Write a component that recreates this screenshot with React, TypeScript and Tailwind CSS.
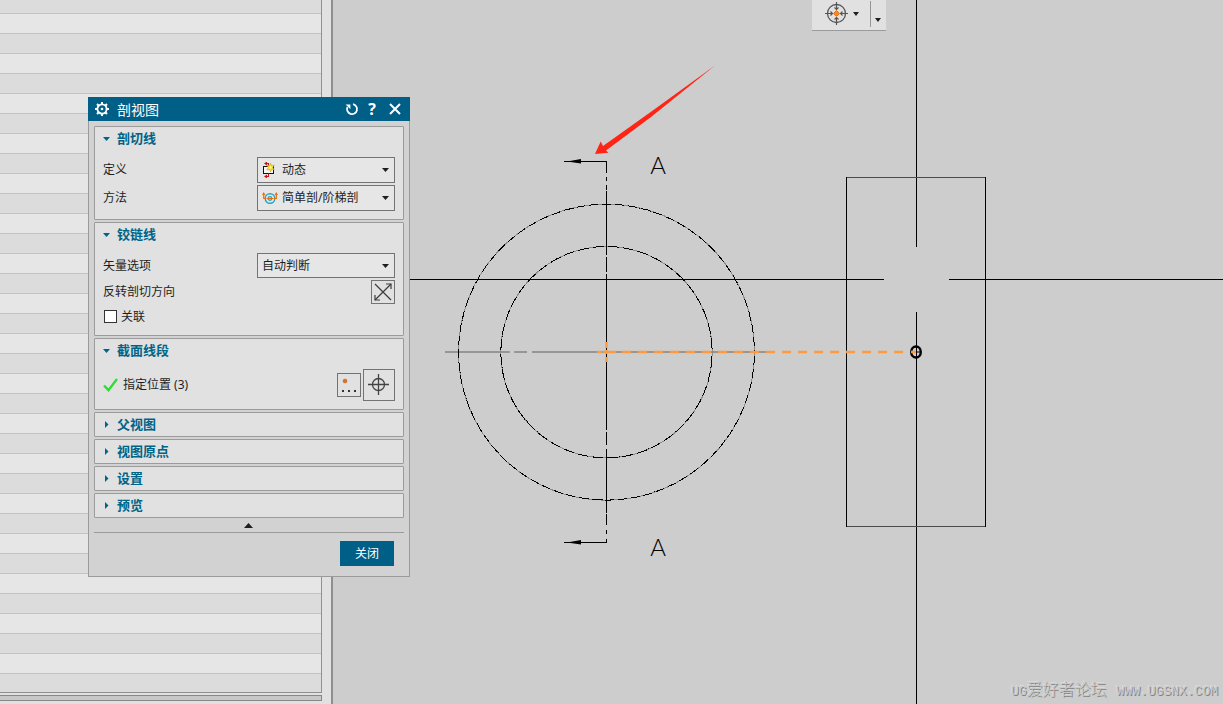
import React, { useState } from "react";

const ROWS = Array.from({ length: 60 }, (_, i) => i);

const Triangle = ({ className, points }: { className?: string; points: string }) => (
    <svg className={className} width="8" height="8" viewBox="0 0 8 8" fill="currentColor" aria-hidden="true">
        <polygon points={points} />
    </svg>
);

const DOWN = "0,2 7,2 3.5,6";
const RIGHT = "2,0 5.5,3.5 2,7";

const GearIcon = () => (
    <svg width="14" height="14" viewBox="0 0 14 14" fill="none" stroke="white" aria-hidden="true">
        <circle cx="7" cy="7" r="4.6" strokeWidth="1.8" />
        <circle cx="7" cy="7" r="1.3" fill="white" stroke="none" />
        <path d="M7 0v2.4M7 11.6V14M0 7h2.4M11.6 7H14M2 2l1.8 1.8M10.2 10.2L12 12M12 2l-1.8 1.8M3.8 10.2L2 12" strokeWidth="2" />
    </svg>
);

const ResetIcon = () => (
    <svg width="14" height="14" viewBox="0 0 14 14" fill="none" stroke="white" strokeWidth="1.8" aria-hidden="true">
        <path d="M8 2.2A5 5 0 1 1 2.4 5.2" />
        <path d="M0.6 2.400h4.800v4.800z" fill="white" stroke="none" />
    </svg>
);

const CloseIcon = () => (
    <svg width="12" height="12" viewBox="0 0 12 12" fill="none" stroke="white" strokeWidth="2" aria-hidden="true">
        <path d="M1 1l10 10M11 1L1 11" />
    </svg>
);

const DynamicIcon = () => (
    <svg width="16" height="16" viewBox="0 0 16 16" fill="none" aria-hidden="true">
        <rect x="1.5" y="4.500" width="10" height="7" fill="#f5f5f5" stroke="#111" />
        <path d="M6.500 1.5v3M6.500 11.500v3" stroke="#c81414" />
        <path d="M7 1.5H4M7 14.500H4" stroke="#c81414" />
        <path d="M2 1.5l3-2v4zM2 14.500l3-2v4z" fill="#c81414" />
        <path d="M8.500 1l1 2.700 2.800-.7-1.500 2.500 1.500 2.500-2.800-.6-1 2.600-1-2.600-2.800.6 1.500-2.500-1.500-2.500 2.800.7z" fill="#f5e52d" stroke="#8f8b3c" strokeWidth=".4" />
        <circle cx="8.500" cy="5.500" r="1" fill="#fffbd0" />
    </svg>
);

const StepIcon = () => (
    <svg width="16" height="16" viewBox="0 0 16 16" fill="none" aria-hidden="true">
        <circle cx="8" cy="8.500" r="4.800" stroke="#24a5c8" strokeWidth="1.4" />
        <circle cx="8" cy="8.500" r="1.800" stroke="#24a5c8" strokeWidth="1.3" />
        <path d="M1.700 3.500v5H4.500M14.300 3.500v5H11.500M5 8.500h6" stroke="#e8700a" strokeWidth="1.2" />
        <path d="M0 5L1.700 2 3.400 5zM12.600 5l1.700-3L16 5z" fill="#e8700a" />
    </svg>
);

const SwapIcon = () => (
    <svg width="18" height="18" viewBox="0 0 18 18" fill="none" stroke="#3c3c3c" strokeWidth="1.2" aria-hidden="true">
        <path d="M1 1l16 16M17 1L1 17" />
        <path d="M12 1h5v5M1 12v5h5" />
    </svg>
);

const CheckIcon = () => (
    <svg width="16" height="14" viewBox="0 0 16 14" fill="none" stroke="#32dc32" strokeWidth="2.4" aria-hidden="true">
        <path d="M1 7.5l4.5 4.7L14 1" />
    </svg>
);

const PointDialogIcon = () => (
    <svg width="22" height="22" viewBox="0 0 22 22" aria-hidden="true">
        <circle cx="7" cy="7" r="2" fill="#e07020" stroke="#a85010" strokeWidth=".4" />
        <path d="M4 16h2v2H4zM10 16h2v2h-2zM16 16h2v2h-2z" fill="#333" />
    </svg>
);

const CrosshairIcon = () => (
    <svg width="22" height="22" viewBox="0 0 22 22" fill="none" stroke="#444" strokeWidth="1.3" aria-hidden="true">
        <circle cx="10.500" cy="10.500" r="6" />
        <path d="M10.500 0v21M0 10.500h21" />
    </svg>
);

const SnapPointIcon = () => (
    <svg width="24" height="24" viewBox="0 0 24 24" fill="none" stroke="#555" aria-hidden="true">
        <circle cx="12.500" cy="11.500" r="9" strokeWidth="1.3" />
        <path d="M12.500 0v7M12.500 16v7M1 11.500h7M17 11.500h7" strokeWidth="1.2" />
        <path d="M10.500 5.500l2 2 2-2M10.500 17.500l2-2 2 2M6.500 9.500l2 2-2 2M18.500 9.500l-2 2 2 2" strokeWidth="1.1" />
        <path d="M12.500 8.500l3 3-3 3-3-3z" fill="#f58a17" stroke="#e0620a" strokeWidth=".8" />
    </svg>
);

type SectionProps = { title: string; defaultOpen?: boolean; children?: React.ReactNode };

const Section = ({ title, defaultOpen = false, children }: SectionProps) => {
    const [open, setOpen] = useState(defaultOpen);

    return (
        <section className="rounded-[1px] border border-[#9b9b9b] bg-[#e1e1e1]">
            <button
                type="button"
                aria-expanded={open}
                onClick={() => setOpen(!open)}
                className="flex h-[23px] w-full items-center gap-1.5 px-2 text-left text-[13px] font-bold text-[#006487]">
                <Triangle points={open ? DOWN : RIGHT} />
                <span>{title}</span>
            </button>
            {open && children && <div className="flex flex-col gap-0.5 px-2 pt-[7px] pb-2">{children}</div>}
        </section>
    );
};

type SelectRowProps = { id: string; label: string; options: string[]; icon?: React.ReactNode };

const SelectRow = ({ id, label, options, icon }: SelectRowProps) => (
    <div className="flex items-center justify-between">
        <label htmlFor={id}>{label}</label>
        <div className="relative w-[138px]">
            {icon && <span className="pointer-events-none absolute top-[5px] left-[5px]">{icon}</span>}
            <select
                id={id}
                className={`block w-full appearance-none border border-[#737373] bg-[#e6e6e6] pr-5 outline-none ${icon ? "h-[26px] pl-6" : "h-[25px] pl-1"}`}>
                {options.map((option) => (
                    <option key={option}>{option}</option>
                ))}
            </select>
            <Triangle points={DOWN} className="pointer-events-none absolute top-[9px] right-[5px]" />
        </div>
    </div>
);

const SectionViewDialog = () => (
    <div
        role="dialog"
        aria-labelledby="dialog-title"
        className="absolute top-[97px] left-[88px] w-[322px] bg-[#d2d2d2] text-xs text-[#1e1e1e]">
        <div className="flex h-6 items-center bg-[#005f87] pr-[9px] pl-[7px] text-white">
            <GearIcon />
            <h1 id="dialog-title" className="flex-1 pt-0.5 pl-2 text-sm leading-5">剖视图</h1>
            <div className="flex items-center gap-[7px]">
                <button type="button" aria-label="重置"><ResetIcon /></button>
                <button type="button" className="w-3 text-center font-['Open_Sans',sans-serif] text-base leading-5 font-bold">?</button>
                <button type="button" aria-label="关闭对话框" className="ml-1"><CloseIcon /></button>
            </div>
        </div>

        <div className="border border-t-0 border-[#9b9b9b] px-[5px] pt-[5px]">
            <div className="flex flex-col gap-0.5">
                <Section title="剖切线" defaultOpen>
                    <SelectRow id="definition" label="定义" options={["动态", "选择现有的"]} icon={<DynamicIcon />} />
                    <SelectRow id="method" label="方法" options={["简单剖/阶梯剖", "半剖", "旋转"]} icon={<StepIcon />} />
                </Section>
                <Section title="铰链线" defaultOpen>
                    <SelectRow id="vector" label="矢量选项" options={["自动判断", "已定义"]} />
                    <div className="flex items-center justify-between">
                        <span id="reverse">反转剖切方向</span>
                        <button type="button" aria-labelledby="reverse" className="flex size-6 items-center justify-center border border-[#737373]">
                            <SwapIcon />
                        </button>
                    </div>
                    <label className="flex h-[21px] items-center gap-1 pl-px">
                        <input type="checkbox" className="size-[13px] appearance-none border border-[#333] bg-white checked:bg-[#005f87]" />
                        关联
                    </label>
                </Section>
                <Section title="截面线段" defaultOpen>
                    <div className="flex items-center gap-0.5">
                        <CheckIcon />
                        <span className="flex-1 pl-0.5">指定位置 (3)</span>
                        <button type="button" aria-label="点对话框" className="flex size-6 items-center justify-center border border-[#737373]">
                            <PointDialogIcon />
                        </button>
                        <button type="button" aria-label="指定位置" className="flex size-8 items-center justify-center border border-[#737373]">
                            <CrosshairIcon />
                        </button>
                    </div>
                </Section>
                <Section title="父视图" />
                <Section title="视图原点" />
                <Section title="设置" />
                <Section title="预览" />
            </div>

            <button type="button" aria-label="收起" className="flex h-[15px] w-full items-center justify-center border-b border-[#9b9b9b]">
                <svg width="10" height="5" viewBox="0 0 10 5" aria-hidden="true"><polygon points="4.5,0 9,5 0,5" fill="#1e1e1e" /></svg>
            </button>
            <div className="flex justify-end px-[10px] pt-2 pb-[10px]">
                <button type="button" className="h-[25px] w-[54px] bg-[#005f87] text-white">关闭</button>
            </div>
        </div>
    </div>
);

const PartList = () => (
    <aside className="flex w-[333px] shrink-0 flex-col gap-0.5 border-r-2 border-[#8f8f8f] bg-[#e1e1e1] pr-[9px] pb-[3px]">
        <div className="min-h-0 flex-1 overflow-hidden border-r border-b border-[#919191]">
            <ul className="-mt-1.5">
                {ROWS.map((row) => (
                    <li key={row} className="h-5 border-b border-[#c3c3c3] odd:bg-[#dcdcdc] even:bg-[#e6e6e6]" />
                ))}
            </ul>
        </div>
        <div className="h-1.5 border border-l-0 border-[#878787] bg-[#c8c8c8]" />
    </aside>
);

const SectionArrow = ({ y }: { y: number }) => (
    <g>
        <path d={`M564 ${y}H607`} stroke="#000" shapeRendering="crispEdges" />
        <polygon points={`567,${y} 581,${y - 2.5} 581,${y + 2}`} />
    </g>
);

// Drawing coordinates are measured from the window edge, the canvas starts after the part list.
const Drawing = () => (
    <svg className="block h-full w-full" aria-label="图纸">
        <g transform="translate(-333 0)" fill="none">
            <g stroke="#000" shapeRendering="crispEdges">
                <path d="M333 279.500H884M949 279.500H4000M916.500 0V247M916.500 312V4000" />
                <path d="M846.500 177V527M985.500 177V527" />
                <path d="M847 177.500H985M847 526.500H985" stroke="#4b4b4b" />
            </g>

            <path d="M445 352H510M514 352H527M532 352H773" stroke="#969696" strokeWidth="2" />
            <g shapeRendering="crispEdges">
                <circle cx="606.5" cy="352.2" r="148" stroke="#000" />
                <circle cx="606.5" cy="352.2" r="105.7" stroke="#000" />
                <circle cx="606.5" cy="352.2" r="148" stroke="#8c8c8c" strokeDasharray="4 9" />
                <circle cx="606.5" cy="352.2" r="105.7" stroke="#8c8c8c" strokeDasharray="4 11" />
                <path d="M606.500 161V173M606.500 177V181M606.500 185V190M606.500 191V255M606.500 257V272M606.500 274V430M606.500 432V445M606.500 449V513M606.500 514V525M606.500 530V534M606.500 539V543" stroke="#000" />
            </g>

            <g fill="#000">
                <SectionArrow y={161.5} />
                <SectionArrow y={542.5} />
            </g>
            <g fill="#000" className="font-['Lato',sans-serif] text-[24px] font-light" textAnchor="middle">
                <text x="658" y="174">A</text>
                <text x="658" y="556">A</text>
            </g>

            <path d="M597 352H602M603 352H616M606.500 342V348M606.500 350V354M606.500 357V362" stroke="#ff9b3c" strokeWidth="2.500" />
            <path d="M622 352H906" stroke="#ff9b3c" strokeWidth="2.500" strokeDasharray="9 7" />
            <ellipse cx="916" cy="352" rx="4.800" ry="5.500" stroke="#000" strokeWidth="2.400" />
            <path d="M916.500 347V357" stroke="#000" />
            <path d="M911 352H916" stroke="#ff9b3c" strokeWidth="2.500" />
            <path d="M916 352H920" stroke="#000" />

            <polygon points="595,154 600.7,141.500 603,146 650,112.500 715,65.500 651,117 606,150.500 608.500,152.700" fill="#ff2414" />
        </g>
    </svg>
);

const SnapToolbar = () => (
    <div className="absolute top-0 left-[479px] flex h-[31px] w-[74px] border-b border-[#9b9b9b] bg-[#e1e1e1] text-[#1e1e1e]">
        <button type="button" aria-label="捕捉点" className="flex h-[27px] flex-1 items-center gap-[5px] pl-3">
            <SnapPointIcon />
            <svg width="6" height="4" viewBox="0 0 6 4" aria-hidden="true"><polygon points="0,0 6,0 3,4" fill="currentColor" /></svg>
        </button>
        <button type="button" aria-label="工具条选项" className="mt-px flex h-[26px] w-4 items-end border-l border-[#969696] pb-[5px] pl-1">
            <svg width="6" height="4" viewBox="0 0 6 4" aria-hidden="true"><polygon points="0,0 6,0 3,4" fill="currentColor" /></svg>
        </button>
    </div>
);

const App = () => (
    <div className="relative flex h-screen overflow-hidden bg-[#cdcdcd] font-['Noto_Sans','Noto_Sans_CJK_SC',sans-serif]">
        <PartList />
        <main className="relative min-w-0 flex-1 overflow-hidden">
            <Drawing />
            <SnapToolbar />
            <p className="absolute right-[5px] bottom-0.5 flex items-baseline gap-2.5 font-['Liberation_Mono','Noto_Sans_CJK_SC',monospace] text-[13px] leading-5 text-[#c8c8c8] [text-shadow:1px_1px_0_#828282,-1px_-1px_0_#dcdcdc]">
                <span>UG<span className="text-base leading-5 font-light">爱好者论坛</span></span>
                <span>WWW.UGSNX.COM</span>
            </p>
        </main>
        <SectionViewDialog />
    </div>
);

export default App;
